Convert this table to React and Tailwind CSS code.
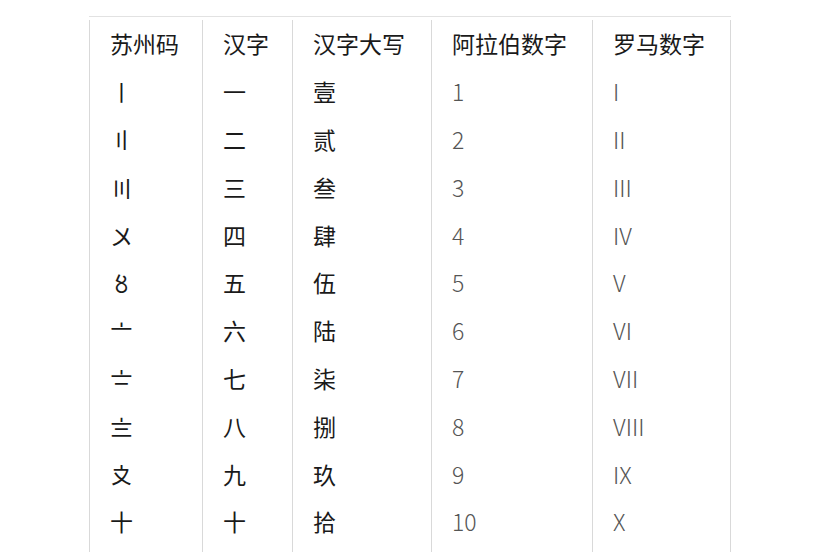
const header = ['苏州码', '汉字', '汉字大写', '阿拉伯数字', '罗马数字'];

const rows = [
  ['〡', '一', '壹', '1', 'I'],
  ['〢', '二', '贰', '2', 'II'],
  ['〣', '三', '叁', '3', 'III'],
  ['〤', '四', '肆', '4', 'IV'],
  ['〥', '五', '伍', '5', 'V'],
  ['〦', '六', '陆', '6', 'VI'],
  ['〧', '七', '柒', '7', 'VII'],
  ['〨', '八', '捌', '8', 'VIII'],
  ['〩', '九', '玖', '9', 'IX'],
  ['十', '十', '拾', '10', 'X'],
  ['', '', '', '', ''],
];

const cols = 'grid grid-cols-[114px_90px_139px_161px_138px]';

function Cell({ children, muted, first }) {
  return (
    <div
      className={`h-[47.8px] flex items-center pl-[20px] border-r border-[#d9d9d9] ${
        first ? 'border-l' : ''
      } ${muted ? 'text-[#555] font-light' : 'text-[#1a1a1a]'}`}
    >
      {children}
    </div>
  );
}

export default function App() {
  return (
    <div
      className="w-[829px] h-[552px] bg-white overflow-hidden pt-[16px] pl-[89px]"
      style={{ fontFamily: '"Noto Sans CJK SC", "Noto Sans", sans-serif' }}
    >
      <div className="w-[642px] border-t border-[#e2e2e2] pt-[3px] text-[23px] leading-none">
        <div className={cols}>
          {header.map((h, i) => (
            <Cell key={h} first={i === 0}>
              {h}
            </Cell>
          ))}
        </div>
        {rows.map((r, ri) => (
          <div key={ri} className={cols}>
            {r.map((c, i) => (
              <Cell key={i} first={i === 0} muted={i >= 3}>
                {c}
              </Cell>
            ))}
          </div>
        ))}
      </div>
    </div>
  );
}
